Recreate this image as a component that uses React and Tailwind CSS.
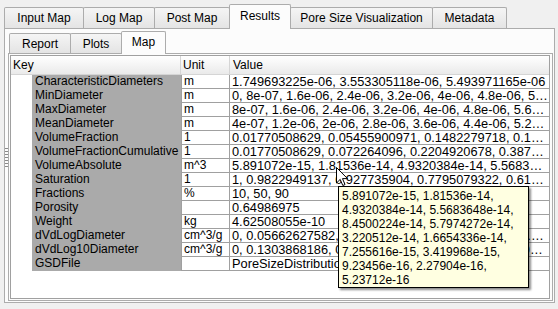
import React from "react";

const rows = [
  ["CharacteristicDiameters", "m", "1.749693225e-06, 3.553305118e-06, 5.493971165e-06"],
  ["MinDiameter", "m", "0, 8e-07, 1.6e-06, 2.4e-06, 3.2e-06, 4e-06, 4.8e-06, 5.6e-06, 6.4e-06"],
  ["MaxDiameter", "m", "8e-07, 1.6e-06, 2.4e-06, 3.2e-06, 4e-06, 4.8e-06, 5.6e-06, 6.4e-06"],
  ["MeanDiameter", "m", "4e-07, 1.2e-06, 2e-06, 2.8e-06, 3.6e-06, 4.4e-06, 5.2e-06, 6e-06"],
  ["VolumeFraction", "1", "0.01770508629, 0.05455900971, 0.1482279718, 0.1669838455"],
  ["VolumeFractionCumulative", "1", "0.01770508629, 0.072264096, 0.2204920678, 0.3874759133"],
  ["VolumeAbsolute", "m^3", "5.891072e-15, 1.81536e-14, 4.9320384e-14, 5.5683648e-14"],
  ["Saturation", "1", "1, 0.9822949137, 0.927735904, 0.7795079322, 0.6125240867"],
  ["Fractions", "%", "10, 50, 90"],
  ["Porosity", "", "0.64986975"],
  ["Weight", "kg", "4.62508055e-10"],
  ["dVdLogDiameter", "cm^3/g", "0, 0.05662627582, 0.1733596543, 0.3960518809, 0.4469"],
  ["dVdLog10Diameter", "cm^3/g", "0, 0.1303868186, 0.3991730438, 0.9119366208, 1.0298"],
  ["GSDFile", "", "PoreSizeDistribution.csv"],
];

const tooltipLines = [
  "5.891072e-15, 1.81536e-14,",
  "4.9320384e-14, 5.5683648e-14,",
  "8.4500224e-14, 5.7974272e-14,",
  "3.220512e-14, 1.6654336e-14,",
  "7.255616e-15, 3.419968e-15,",
  "9.23456e-16, 2.27904e-16,",
  "5.23712e-16",
];

function Tab({ label, w, active, first, small }) {
  if (active) {
    return (
      <div
        className={`relative z-10 -mb-px flex shrink-0 items-center justify-center rounded-t-[2px] border border-b-0 border-[#acacac] bg-[#fcfcfc] ${
          first ? "" : "-ml-px"
        } ${small ? "h-[23px] pb-[2px]" : "h-[25px] pb-[2px]"}`}
        style={{ width: w }}
      >
        {label}
      </div>
    );
  }
  return (
    <div
      className={`flex shrink-0 items-center justify-center rounded-t-[2px] border border-b-0 border-[#acacac] bg-gradient-to-b from-[#f5f5f5] to-[#e4e4e4] ${
        first ? "" : "-ml-px"
      } ${small ? "h-[20px]" : "h-[21px]"}`}
      style={{ width: w }}
    >
      {label}
    </div>
  );
}

export default function App() {
  return (
    <div className="relative h-[309px] w-[558px] overflow-hidden bg-[#f0f0f0] font-['Liberation_Sans',Arial,sans-serif] text-[12px] text-black">
      <div className="pl-[4px] pt-[4px]">
        {/* outer tabs */}
        <div className="flex h-[24px] items-end">
          <Tab label="Input Map" w={80} first />
          <Tab label="Log Map" w={72} />
          <Tab label="Post Map" w={76} />
          <Tab label="Results" w={62} active />
          <Tab label="Pore Size Visualization" w={143} />
          <Tab label="Metadata" w={75} />
        </div>
        {/* outer panel */}
        <div className="h-[275px] w-[551px] border border-[#acacac] bg-[#fcfcfc]">
          <div className="pl-[3px] pt-[2px]">
            <div className="flex h-[22px] items-end pl-px">
              <Tab label="Report" w={62} first small />
              <Tab label="Plots" w={52} small />
              <Tab label="Map" w={45} active small />
            </div>
            {/* inner pane */}
            <div className="h-[248px] w-[545px] border border-[#acacac] bg-[#fcfcfc] p-px">
              <div className="h-[244px] w-[540px] overflow-hidden border border-[#a0a0a0] bg-white">
                {/* header */}
                <div className="grid h-[19px] grid-cols-[170px_49px_1fr] border-b border-[#d5d5d5] bg-gradient-to-b from-white to-[#eaeaea] leading-[18px]">
                  <div className="border-r border-[#d5d5d5] pl-[2px]">Key</div>
                  <div className="border-r border-[#d5d5d5] pl-[2px]">Unit</div>
                  <div className="pl-[3px]">Value</div>
                </div>
                {rows.map(([k, u, v]) => (
                  <div key={k} className="grid h-[14px] grid-cols-[21px_149px_49px_1fr] leading-[13px]">
                    <div className="bg-white" />
                    <div className="overflow-hidden whitespace-nowrap bg-[#aaaaaa] pl-[3px]">{k}</div>
                    <div className="truncate border-b border-l border-r border-[#a0a0a0] pl-[2px]">{u}</div>
                    <div className="truncate border-b border-[#a0a0a0] pl-[2px] text-[12.8px]">{v}</div>
                  </div>
                ))}
              </div>
            </div>
          </div>
        </div>
      </div>

      {/* splitter handle */}
      <div className="absolute left-[5px] top-[148px] flex flex-col gap-[2px]">
        {[0, 1, 2, 3, 4, 5, 6].map((i) => (
          <div key={i} className="h-px w-[3px] bg-[#8a8a8a]" />
        ))}
      </div>

      {/* tooltip */}
      <div className="absolute left-[338px] top-[186px] h-[102px] w-[191px] border border-black bg-[#ffffe1] px-[3px] pt-[2px] leading-[14px] shadow-[2px_2px_2px_rgba(0,0,0,0.45)]">
        {tooltipLines.map((l) => (
          <div key={l} className="whitespace-nowrap">
            {l}
          </div>
        ))}
      </div>

      {/* mouse cursor */}
      <svg className="absolute left-[336px] top-[167px]" width="13" height="20" viewBox="0 0 13 20">
        <path
          d="M0.5 0.5 L0.5 16 L4.2 12.4 L6.8 18.5 L9 17.6 L6.5 11.6 L11.5 11.6 Z"
          fill="white"
          stroke="black"
          strokeWidth="1"
          strokeLinejoin="miter"
        />
      </svg>
    </div>
  );
}
